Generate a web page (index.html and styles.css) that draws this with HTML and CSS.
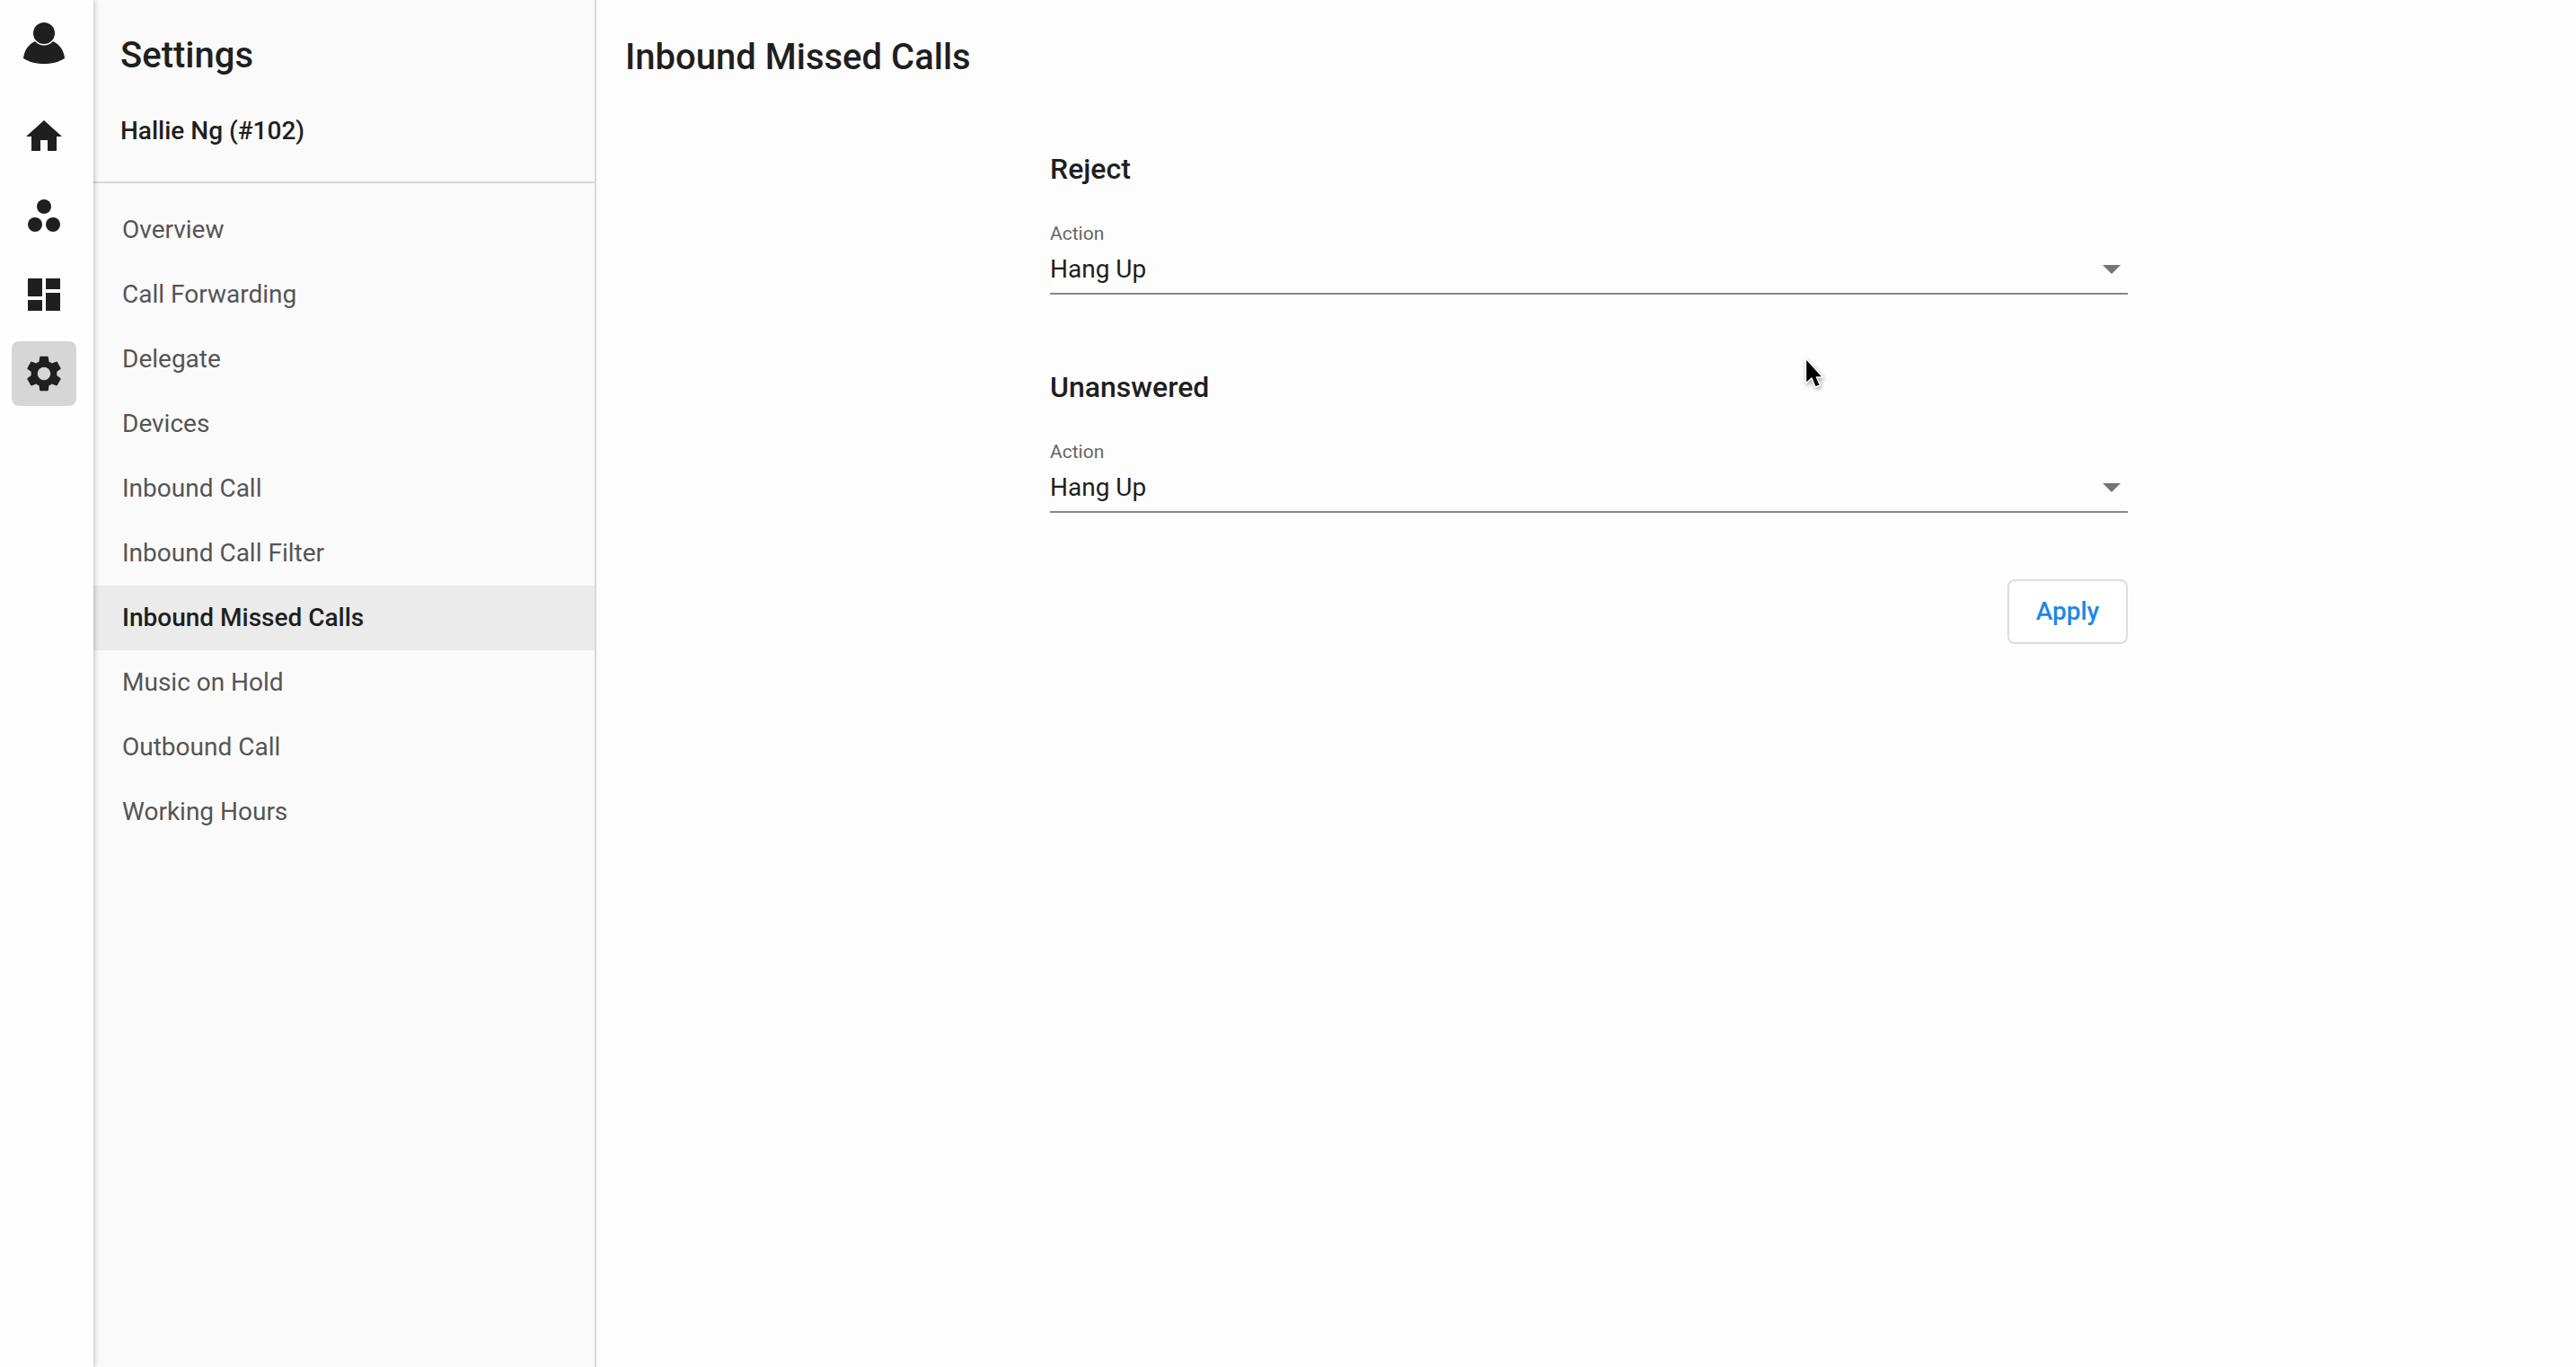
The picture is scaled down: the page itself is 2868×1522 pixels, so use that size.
FILE: index.html
```html
<!DOCTYPE html>
<html lang="en">
<head>
  <meta charset="UTF-8" />
  <title>Inbound Missed Calls</title>
  <link rel="stylesheet" href="styles.css">
</head>
<body>
  <nav class="rail">
    <div class="rail-avatar">
      <svg class="icon" viewBox="0 0 48 48">
        <path d="M1 41C2 30 10 20 24 20C38 20 46 30 47 41C40 45.5 32 47 24 47C16 47 8 45.5 1 41Z" />
        <circle class="gap" cx="24" cy="13" r="13.5" />
        <circle cx="24" cy="13" r="12" />
      </svg>
    </div>
    <div class="rail-item">
      <svg class="icon" viewBox="0 0 24 24"><path d="M10 20v-6h4v6h5v-8h3L12 3 2 12h3v8z" /></svg>
    </div>
    <div class="rail-item">
      <svg class="icon" viewBox="0 0 48 48">
        <circle cx="24" cy="14" r="8" />
        <circle cx="14" cy="34" r="8" />
        <circle cx="34" cy="34" r="8" />
      </svg>
    </div>
    <div class="rail-item">
      <svg class="icon" viewBox="0 0 24 24"><path d="M3 13h8V3H3v10zm0 8h8v-6H3v6zm10 0h8V11h-8v10zm0-18v6h8V3h-8z" /></svg>
    </div>
    <div class="rail-item active">
      <svg class="icon" viewBox="0 0 24 24"><path d="M19.14 12.94c.04-.3.06-.61.06-.94 0-.32-.02-.64-.07-.94l2.03-1.58c.18-.14.23-.41.12-.61l-1.92-3.32c-.12-.22-.37-.29-.59-.22l-2.39.96c-.5-.38-1.03-.7-1.62-.94l-.36-2.54c-.04-.24-.24-.41-.48-.41h-3.84c-.24 0-.43.17-.47.41l-.36 2.54c-.59.24-1.13.57-1.62.94l-2.39-.96c-.22-.08-.47 0-.59.22L2.74 8.87c-.12.21-.08.47.12.61l2.03 1.58c-.05.3-.09.63-.09.94s.02.64.07.94l-2.03 1.58c-.18.14-.23.41-.12.61l1.92 3.32c.12.22.37.29.59.22l2.39-.96c.5.38 1.03.7 1.62.94l.36 2.54c.05.24.24.41.48.41h3.84c.24 0 .44-.17.47-.41l.36-2.54c.59-.24 1.13-.56 1.62-.94l2.39.96c.22.08.47 0 .59-.22l1.92-3.32c.12-.22.07-.47-.12-.61l-2.01-1.58zM12 15.6c-1.98 0-3.6-1.62-3.6-3.6s1.62-3.6 3.6-3.6 3.6 1.62 3.6 3.6-1.62 3.6-3.6 3.6z" /></svg>
    </div>
  </nav>

  <aside class="sidebar">
    <div class="sidebar-head">
      <h2>Settings</h2>
      <div class="user-name">Hallie Ng (#102)</div>
    </div>
    <div class="menu">
      <div class="menu-item">Overview</div>
      <div class="menu-item">Call Forwarding</div>
      <div class="menu-item">Delegate</div>
      <div class="menu-item">Devices</div>
      <div class="menu-item">Inbound Call</div>
      <div class="menu-item">Inbound Call Filter</div>
      <div class="menu-item selected">Inbound Missed Calls</div>
      <div class="menu-item">Music on Hold</div>
      <div class="menu-item">Outbound Call</div>
      <div class="menu-item">Working Hours</div>
    </div>
  </aside>

  <main class="main">
    <h1>Inbound Missed Calls</h1>
    <div class="form">
      <section class="group">
        <h3>Reject</h3>
        <label class="field-label">Action</label>
        <div class="select">
          <span>Hang Up</span>
          <span class="arrow"></span>
        </div>
      </section>
      <section class="group">
        <h3>Unanswered</h3>
        <label class="field-label">Action</label>
        <div class="select">
          <span>Hang Up</span>
          <span class="arrow"></span>
        </div>
      </section>
      <div class="actions">
        <button class="apply">Apply</button>
      </div>
    </div>
  </main>

  <!-- mouse pointer caught in the capture -->
  <svg class="cursor" viewBox="0 0 26 38">
    <path d="M2.5 2V30L9 24L13 34L18.5 32L14.5 23L21.5 23Z" fill="#000" stroke="#fff" stroke-width="1.5" stroke-linejoin="round" />
  </svg>
</body>
</html>
```

FILE: styles.css
```css
* {
  box-sizing: border-box;
}

html, body {
  height: 100%;
}

body {
  margin: 0;
  display: flex;
  height: 1522px;
  overflow: hidden;
  background: #fdfdfd;
  color: #1f1f1f;
  font-family: Roboto, "Liberation Sans", sans-serif;
}

.rail {
  position: relative;
  z-index: 1;
  flex: 0 0 104px;
  display: flex;
  flex-direction: column;
  align-items: center;
  gap: 16px;
  padding: 24px 6px 0 0;
  background: #fefefe;
  box-shadow: 1px 0 6px rgba(0, 0, 0, 0.25);
}

.icon {
  display: block;
  width: 48px;
  height: 48px;
  fill: #1f1f1f;
}

.icon .gap {
  fill: #fefefe;
}

.rail-avatar {
  height: 48px;
  margin-bottom: 28px;
}

.rail-item {
  width: 72px;
  height: 72px;
  display: flex;
  align-items: center;
  justify-content: center;
  border-radius: 8px;
}

.rail-item.active {
  background: #d6d6d6;
}

.sidebar {
  flex: 0 0 560px;
  background: #fafafa;
  border-right: 2px solid #d8d8d8;
}

.sidebar-head {
  padding: 38px 30px 36px;
  border-bottom: 2px solid #d8d8d8;
}

h2 {
  margin: 0 0 40px;
  font-size: 40px;
  line-height: 48px;
  font-weight: 500;
}

.user-name {
  font-size: 28px;
  line-height: 40px;
  font-weight: 500;
}

.menu {
  padding-top: 16px;
}

.menu-item {
  height: 72px;
  padding-left: 32px;
  font-size: 28px;
  line-height: 71px;
  color: #555;
}

.menu-item.selected {
  background: #ebebeb;
  color: #1f1f1f;
  font-weight: 500;
}

.main {
  flex: 1;
  padding: 40px 0 0 32px;
}

h1 {
  margin: 0 0 80px;
  font-size: 40px;
  line-height: 48px;
  font-weight: 500;
}

.form {
  width: 1200px;
  margin-left: 473px;
}

.group {
  margin-bottom: 82.5px;
}

h3 {
  margin: 0 0 38px;
  font-size: 32px;
  line-height: 40px;
  font-weight: 500;
}

.field-label {
  display: block;
  font-size: 21px;
  line-height: 28px;
  color: #666;
}

.select {
  display: flex;
  align-items: center;
  justify-content: space-between;
  margin-top: 5px;
  padding: 1px 8px 6px 0;
  border-bottom: 2px solid #888;
  font-size: 28px;
  line-height: 40px;
}

.arrow {
  width: 0;
  height: 0;
  border-left: 10px solid transparent;
  border-right: 10px solid transparent;
  border-top: 10px solid #757575;
}

.actions {
  display: flex;
  justify-content: flex-end;
  margin-top: -8px;
}

.apply {
  width: 134px;
  height: 72px;
  padding: 0 0 2px;
  background: #fff;
  border: 2px solid #ddd;
  border-radius: 8px;
  color: #1e88e5;
  font-family: inherit;
  font-size: 28px;
  font-weight: 500;
}

.cursor {
  position: absolute;
  left: 2008px;
  top: 397px;
  width: 26px;
  height: 38px;
  filter: drop-shadow(1px 2px 2px rgba(0, 0, 0, 0.35));
}
```
